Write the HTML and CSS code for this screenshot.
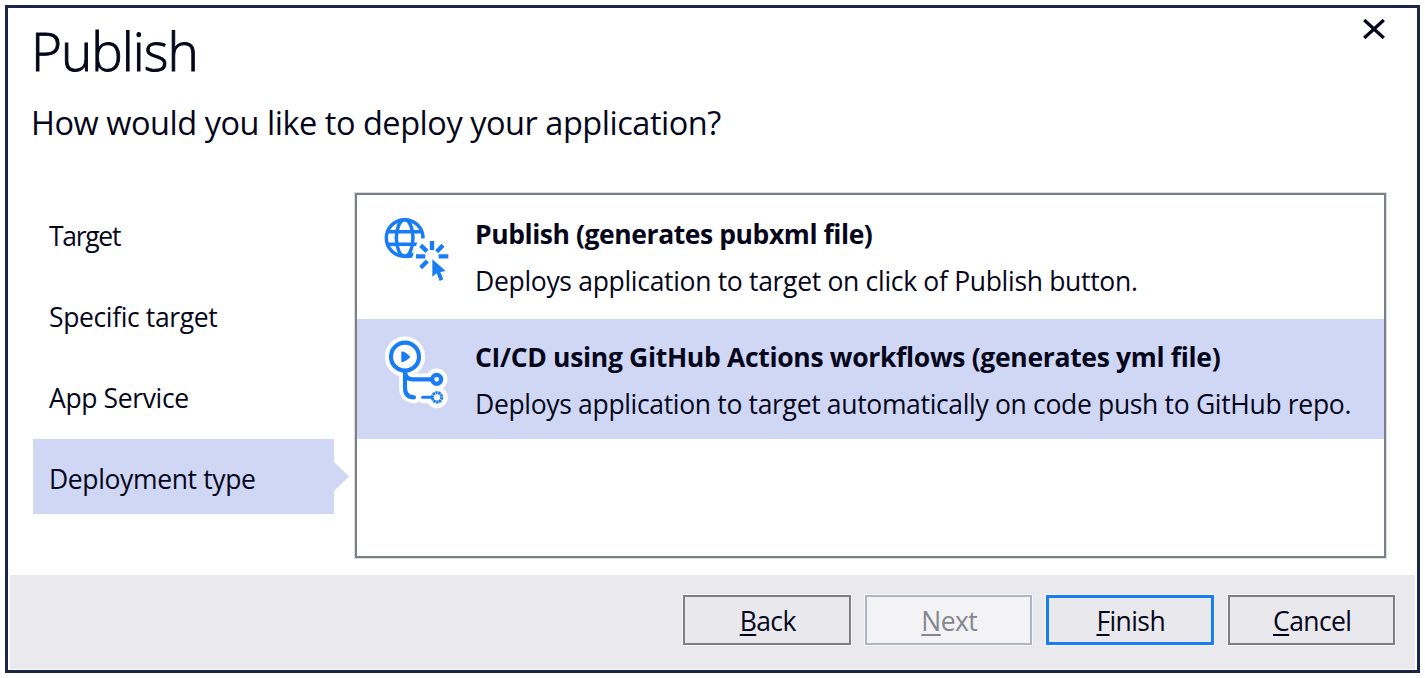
FILE: index.html
```html
<!DOCTYPE html>
<html lang="en">
<head>
<meta charset="utf-8">
<title>Publish</title>
<link rel="stylesheet" href="styles.css">
</head>
<body>
<main class="dialog">
  <header class="header">
    <div>
      <h1 class="title"><span>Publish</span></h1>
      <p class="subtitle"><span>How would you like to deploy your application?</span></p>
    </div>
    <button class="close" aria-label="Close">
      <svg width="24" height="20" viewBox="0 0 24 20"><path d="M2.2 1 L21.8 19 M21.8 1 L2.2 19" fill="none" stroke="#05061a" stroke-width="3.3"/></svg>
    </button>
  </header>
  <div class="content">
    <nav class="steps">
      <a class="step s1"><span>Target</span></a>
      <a class="step s2"><span>Specific target</span></a>
      <a class="step s3"><span>App Service</span></a>
      <a class="step s4 active"><span>Deployment type</span></a>
    </nav>
    <section class="options">
      <article class="option">
        <svg class="icon" width="100" height="90" viewBox="0 0 300 270">
          <g fill="none" stroke="#187cf5" stroke-width="10.500">
            <circle cx="104" cy="99" r="55"/>
            <ellipse cx="104" cy="99" rx="25" ry="55"/>
            <path d="M53 80H155M52 118H156"/>
          </g>
          <path d="M128 170L130 143L142 112L152 101L170 99L180 112V170Z" fill="#fff"/>
          <path d="M108 154L126 152" stroke="#187cf5" stroke-width="12"/>
          <g stroke="#187cf5" stroke-width="13">
            <path d="M186 108V135M138 154H166M206 154H235M152 121L171 139M219 121L200 140M172 168L152 188"/>
          </g>
          <path d="M187 163V215L200 205L209 228L220 223L211 201L227 198Z" fill="#187cf5"/>
        </svg>
        <div>
          <h2 class="name n1"><span>Publish (generates pubxml file)</span></h2>
          <p class="desc d1"><span>Deploys application to target on click of Publish button.</span></p>
        </div>
      </article>
      <article class="option selected">
        <svg class="icon" width="100" height="90" viewBox="0 0 300 270">
          <g fill="none" stroke="#fff" stroke-width="35" stroke-linecap="round" stroke-linejoin="round">
            <circle cx="105" cy="95" r="43" fill="#fff"/>
            <path d="M105 143V188Q105 217 134 217M105 148Q110 163 125 163H184M160 217H190"/>
            <circle cx="200" cy="163" r="15" fill="#fff"/>
            <circle cx="201" cy="217" r="15" fill="#fff"/>
          </g>
          <path d="M115 170H200V215H130Z" fill="#fff"/>
          <g fill="none" stroke="#187cf5" stroke-width="12.500">
            <circle cx="105" cy="95" r="42"/>
            <path d="M105 138V188Q105 217 132 217" stroke-linecap="round"/>
            <path d="M105 140Q106 163 127 163H184"/>
            <circle cx="200" cy="163" r="13.500"/>
            <path d="M158 217H182" stroke-width="9" stroke-linecap="round"/>
            <circle cx="201" cy="217" r="14" stroke-width="9" stroke-dasharray="7 1.500"/>
          </g>
          <path d="M94 80Q104 78 121 96Q107 111 94 112Z" fill="#187cf5"/>
        </svg>
        <div>
          <h2 class="name n2"><span>CI/CD using GitHub Actions workflows (generates yml file)</span></h2>
          <p class="desc d2"><span>Deploys application to target automatically on code push to GitHub repo.</span></p>
        </div>
      </article>
    </section>
  </div>
  <footer class="footer">
    <button class="btn"><span><u>B</u>ack</span></button>
    <button class="btn disabled"><span><u>N</u>ext</span></button>
    <button class="btn primary"><span><u>F</u>inish</span></button>
    <button class="btn"><span><u>C</u>ancel</span></button>
  </footer>
</main>
</body>
</html>
```
FILE: styles.css
```css
* { box-sizing: border-box; }
body {
  margin: 0;
  padding: 5px;
  height: 678px;
  background: #fff;
  color: #05061a;
  font-family: "Open Sans", "Noto Sans", sans-serif;
  font-size: 26.500px;
  overflow: hidden;
}
h1, h2, p { margin: 0; white-space: nowrap; }
.dialog {
  display: flex;
  flex-direction: column;
  width: 1415px;
  height: 668px;
  border: 3px solid #1c2548;
  padding: 0 2px 1px;
}
.header {
  display: flex;
  justify-content: space-between;
  height: 185px;
  padding: 11px 29px 0 21px;
}
.title {
  font-size: 53px;
  font-weight: 300;
  line-height: 64px;
  letter-spacing: -1px;
  -webkit-text-stroke: 0.900px #05061a;
}
.subtitle { font-size: 32.500px; line-height: 44px; margin-top: 18px; letter-spacing: -0.470px; }
.close { width: 24px; height: 20px; padding: 0; border: 0; background: none; }
.close svg { display: block; }
.content { display: flex; height: 382px; padding-left: 23px; }
.steps {
  display: flex;
  flex-direction: column;
  gap: 6px;
  width: 301px;
  padding-top: 3px;
}
.step {
  position: relative;
  height: 75px;
  padding: 3px 0 0 16px;
  line-height: 75px;
  letter-spacing: -0.370px;
  white-space: nowrap;
}
.s1 { letter-spacing: -1.300px; }
.active { background: #cfd7f5; }
.active::after {
  content: "";
  position: absolute;
  left: 100%;
  top: 23px;
  width: 15px;
  height: 29px;
  background: #cfd7f5;
  clip-path: polygon(0 0, 100% 50%, 0 100%);
}
.options {
  width: 1031px;
  height: 365px;
  margin-left: 21px;
  border: 2px solid #7d7f86;
  box-shadow: 0 0 0 1px #dcdde3;
}
.option { display: flex; height: 120px; padding-left: 13px; }
.option:first-child { height: 124px; }
.icon { display: block; flex: none; margin: 10px 5px 0 0; }
.selected .icon { margin-top: 6px; }
.selected { background: #cfd7f5; }
.name { font-size: 26.500px; font-weight: 700; line-height: 40px; margin-top: 19px; }
.n1 { letter-spacing: -0.430px; }
.n2 { letter-spacing: -0.320px; }
.desc { line-height: 40px; margin-top: 7px; letter-spacing: -0.310px; }
.selected .desc { letter-spacing: -0.330px; }
.selected .name { margin-top: 18px; }
.footer {
  display: flex;
  justify-content: flex-end;
  gap: 14px;
  height: 94px;
  padding: 20px 20px 0 0;
  background: #eae9ee;
}
.btn {
  width: 167.500px;
  height: 50px;
  padding: 0;
  border: 2px solid #7d7f86;
  outline: 1px solid #f7f7fa;
  background: #e8e8ed;
  color: #05061a;
  font: 26.500px "Open Sans", sans-serif;
  letter-spacing: -0.600px;
}
.btn span { display: block; line-height: 44px; padding: 2px 0 0 2px; }
.btn u { text-decoration-thickness: 2px; text-underline-offset: 3px; }
.disabled { border-color: #b1b4c2; background: #f3f3f6; color: #85868f; }
.primary { border: 3px solid #187cf5; }
.primary span { line-height: 43px; }
```
